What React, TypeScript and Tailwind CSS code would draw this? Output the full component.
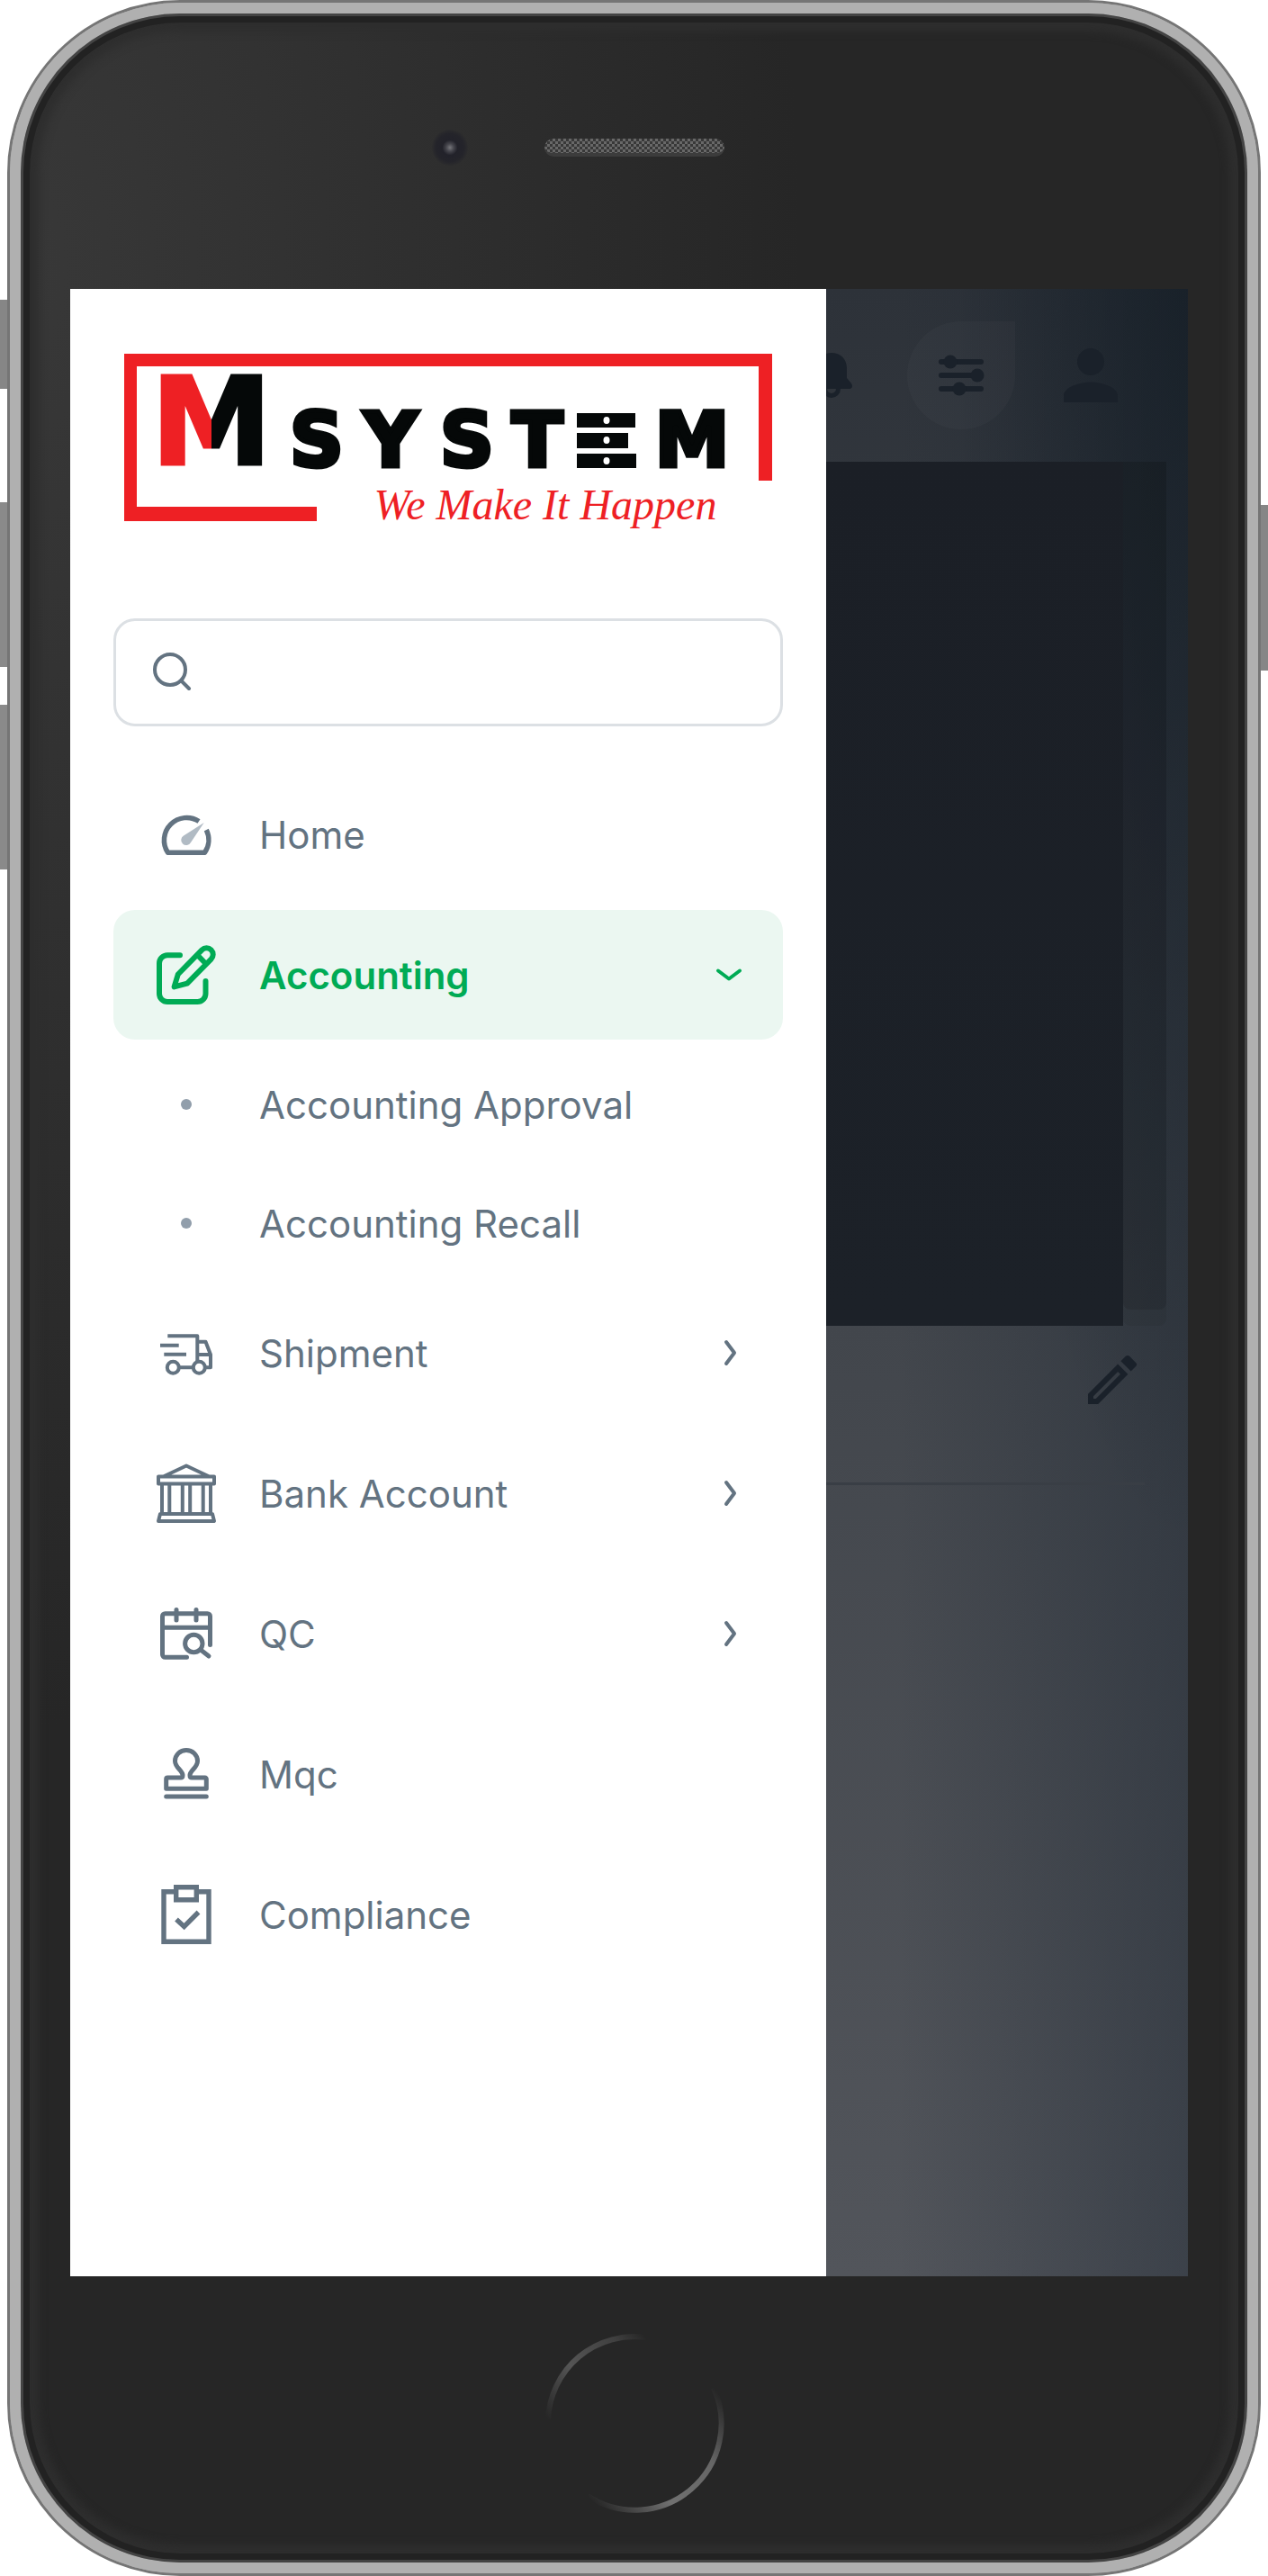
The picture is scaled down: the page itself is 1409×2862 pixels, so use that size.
import { useState } from 'react';
import type { ReactNode } from 'react';
import { MdOutlineEdit, MdPerson } from 'react-icons/md';

const icon = 'size-[72px] shrink-0';

function Logo() {
  return (
    <svg viewBox="0 0 720 190" className="w-full overflow-visible" role="img" aria-label="M System — We Make It Happen">
      <defs>
        <linearGradient id="split" gradientUnits="userSpaceOnUse" x1="39" x2="155" y1="0" y2="0">
          <stop offset="50%" stopColor="#ee2024" />
          <stop offset="50%" stopColor="#050808" />
        </linearGradient>
      </defs>
      <path d="M0 0H720V141H705V14H14V170H214V186H0Z" fill="#ee2024" />
      <g fontFamily="'DejaVu Sans', sans-serif" fontWeight="700" textAnchor="middle" fill="#050808" stroke="#050808" strokeWidth="5">
        <text x="97" y="123" fontSize="135" fill="url(#split)" stroke="url(#split)" strokeWidth="3">M</text>
        <g fontSize="83">
          <text x="214" y="125">S</text>
          <text x="296" y="125">Y</text>
          <text x="381" y="125">S</text>
          <text x="459" y="125">T</text>
          <text x="631" y="125">M</text>
        </g>
      </g>
      <path d="M503 66H568V82H503ZM503 88H560V105H503ZM503 111H569V127H503Z" fill="#050808" />
      <g fill="#fff">
        <ellipse cx="536" cy="74" rx="3.5" ry="4" />
        <ellipse cx="536" cy="96" rx="3.5" ry="4" />
        <ellipse cx="536" cy="119" rx="3.5" ry="4" />
      </g>
      <text x="468" y="184" textAnchor="middle" fontFamily="'Liberation Serif', cursive" fontStyle="italic" fontSize="48" fill="#ee2024">
        We Make It Happen
      </text>
    </svg>
  );
}

const HomeIcon = () => (
  <svg viewBox="0 0 72 72" className={icon} fill="none" aria-hidden="true">
    <path d="M50 21.5A25 25 0 0 0 15.5 56.2H56.5A25 25 0 0 0 58.3 31" stroke="currentColor" strokeWidth="5.5" strokeLinejoin="round" />
    <path d="M55.7 23L41 45A5.7 5.7 0 1 1 33 37.5Z" fill="#b1bbc4" />
  </svg>
);

const EditIcon = () => (
  <svg viewBox="0 0 72 72" className={icon} fill="none" stroke="currentColor" strokeWidth="6" strokeLinecap="round" strokeLinejoin="round" aria-hidden="true">
    <path d="M29 14.3H15A9 9 0 0 0 6 23.3V57A9 9 0 0 0 15 66H48.5A9 9 0 0 0 57.5 57V43" />
    <path d="M22.6 49.4L26.8 35.5L53.4 8.4A7.2 7.2 0 0 1 63.6 18.6L37 45.6ZM48.3 14L58 24" />
  </svg>
);

const TruckIcon = () => (
  <svg viewBox="0 0 72 72" className={icon} fill="none" stroke="currentColor" strokeWidth="4" strokeLinejoin="round" aria-hidden="true">
    <path d="M15.3 17.3H48.3V46M48.3 23.7H57.5L63 38V52.3H58M48.3 38H63M7 27.7H27.7M11.3 37.8H36M28 52.3H43" />
    <circle cx="21.3" cy="52.3" r="6.5" />
    <circle cx="50.3" cy="52.3" r="6.5" />
  </svg>
);

const BankIcon = () => (
  <svg viewBox="0 0 72 72" className={icon} fill="none" stroke="currentColor" strokeWidth="4" strokeLinejoin="round" aria-hidden="true">
    <path d="M10.5 17.5L36 5.5L61.5 17.5M5 17.5H67V25.5H5ZM9 26V58M17.3 26V58M31.8 26V58M40.2 26V58M54.7 26V58M63 26V58M7 59H65L67 67H5Z" />
  </svg>
);

const CalendarSearchIcon = () => (
  <svg viewBox="0 0 72 72" className={icon} fill="none" stroke="currentColor" strokeWidth="5" strokeLinecap="round" strokeLinejoin="round" aria-hidden="true">
    <path d="M36.5 62.3H12.5A3 3 0 0 1 9.5 59.3V16.7A3 3 0 0 1 12.5 13.7H59.5A3 3 0 0 1 62.5 16.7V48.5M9.5 29.3H62.5M25 9.5V21M47 9.5V21M52 54L61 61" />
    <circle cx="44.3" cy="47" r="9.7" />
  </svg>
);

const StampIcon = () => (
  <svg viewBox="0 0 72 72" className={icon} fill="none" stroke="currentColor" strokeWidth="5" strokeLinecap="round" strokeLinejoin="round" aria-hidden="true">
    <path d="M13.7 52.3V41.5A1.5 1.5 0 0 1 15.2 40H30C31.5 40 32 39 32 37.5C32 32 23.5 29 23.5 21.5A12.5 12 0 0 1 48.5 21.5C48.5 29 40 32 40 37.5C40 39 40.5 40 42 40H56.8A1.5 1.5 0 0 1 58.3 41.5V52.3ZM13.7 61H58.3" />
  </svg>
);

const ClipboardIcon = () => (
  <svg viewBox="0 0 72 72" className={icon} fill="none" stroke="currentColor" strokeWidth="5.4" aria-hidden="true">
    <path d="M11 10.7H61V66.3H11Z" />
    <path d="M24.7 5.7H47.3V19.7H24.7Z" fill="#fff" />
    <path d="M25 41.5L33.6 49.5L49.5 33.5" />
  </svg>
);

function Chevron({ open }: { open: boolean }) {
  return (
    <svg viewBox="0 0 48 48" className="size-12 shrink-0" fill="none" stroke="currentColor" strokeWidth="4" strokeLinecap="round" strokeLinejoin="round" aria-hidden="true">
      <path d={open ? 'M12 19.5L24 28.5L36 19.5' : 'M21 12L30 24L21 36'} />
    </svg>
  );
}

type Item = { label: string; icon: ReactNode; children?: string[] };

const items: Item[] = [
  { label: 'Home', icon: <HomeIcon /> },
  { label: 'Accounting', icon: <EditIcon />, children: ['Accounting Approval', 'Accounting Recall'] },
  { label: 'Shipment', icon: <TruckIcon />, children: [] },
  { label: 'Bank Account', icon: <BankIcon />, children: [] },
  { label: 'QC', icon: <CalendarSearchIcon />, children: [] },
  { label: 'Mqc', icon: <StampIcon /> },
  { label: 'Compliance', icon: <ClipboardIcon /> },
];

function NavItem({ item, open, onToggle }: { item: Item; open: boolean; onToggle: () => void }) {
  const base = 'flex h-36 w-full items-center gap-[45px] rounded-3xl pr-9 pl-[45px] text-left text-[42px]';
  if (!item.children) {
    return (
      <li>
        <a href="#" className={base}>
          {item.icon}
          <span>{item.label}</span>
        </a>
      </li>
    );
  }
  return (
    <li>
      <button type="button" aria-expanded={open} onClick={onToggle} className={open ? `${base} bg-[#ebf7f1] font-semibold text-[#00ab55]` : base}>
        {item.icon}
        <span className="flex-1">{item.label}</span>
        <Chevron open={open} />
      </button>
      {open && item.children.length > 0 && (
        <ul className="mt-3 flex flex-col gap-3">
          {item.children.map((label) => (
            <li key={label}>
              <a href="#" className="flex h-[120px] items-center gap-[45px] pl-[45px] text-[42px]">
                <span className="flex w-[72px] justify-center">
                  <span className="size-3 rounded-full bg-[#919eab]" />
                </span>
                <span>{label}</span>
              </a>
            </li>
          ))}
        </ul>
      )}
    </li>
  );
}

function Drawer() {
  const [openItem, setOpenItem] = useState<string | null>('Accounting');
  return (
    <aside className="w-[840px] max-w-full shrink-0 bg-white px-12 text-[#637381]">
      <div className="px-3 pt-[72px]">
        <Logo />
      </div>
      <label className="mt-[104px] flex h-[120px] items-center gap-6 rounded-3xl border-[3px] border-[#dce0e4] px-[33px]">
        <svg viewBox="0 0 60 60" className="size-[60px] shrink-0" fill="none" stroke="currentColor" strokeWidth="4" strokeLinecap="round" aria-hidden="true">
          <circle cx="27" cy="27" r="17" />
          <path d="M39.5 39.5L48 48" />
        </svg>
        <input type="search" aria-label="Search menu" className="h-full min-w-0 flex-1 bg-transparent text-[42px] outline-none" />
      </label>
      <nav className="mt-12">
        <ul className="flex flex-col gap-3">
          {items.map((item) => (
            <NavItem key={item.label} item={item} open={openItem === item.label} onToggle={() => setOpenItem(openItem === item.label ? null : item.label)} />
          ))}
        </ul>
      </nav>
    </aside>
  );
}

function DimmedPage() {
  const round = 'flex size-[120px] shrink-0 items-center justify-center';
  return (
    <main className="flex min-w-0 flex-1 flex-col overflow-hidden bg-[radial-gradient(ellipse_at_100%_0%,rgba(10,20,28,0.45),transparent_45%),linear-gradient(to_right,transparent_20%,rgba(24,34,46,0.38)),linear-gradient(to_bottom,#2d3239,#42464c_52%,#52555b)] text-[#1a212a]">
      <header className="flex h-48 items-center justify-end gap-6 pr-12">
        <button type="button" aria-label="Notifications" className={round}>
          <svg viewBox="0 0 60 60" className="size-[60px]" fill="currentColor" aria-hidden="true">
            <path d="M30 5C20 5 13 12 13 22V33L8 39C6 42 7 45 11 45H49C53 45 54 42 52 39L47 33V22C47 12 40 5 30 5Z" />
            <path d="M22.500 45A7.500 7.500 0 0 0 37.500 45" fill="none" stroke="currentColor" strokeWidth="5" />
          </svg>
        </button>
        <button type="button" aria-label="Settings" className={`${round} rounded-[60px] rounded-tr-none bg-white/[0.025]`}>
          <svg viewBox="0 0 60 60" className="size-[60px]" fill="currentColor" stroke="currentColor" strokeWidth="6" strokeLinecap="round" aria-hidden="true">
            <path d="M8 15H52M8 30H52M8 45H52" />
            <g stroke="none">
              <circle cx="18" cy="15" r="7.500" />
              <circle cx="48" cy="30" r="7.500" />
              <circle cx="28" cy="45" r="7.500" />
            </g>
          </svg>
        </button>
        <button type="button" aria-label="Account" className={round}>
          <MdPerson className="size-[90px]" />
        </button>
      </header>
      <section className="mr-6 flex h-[960px]">
        <div className="flex-1 bg-gradient-to-b from-[#1b1f26] to-[#1c2128]" />
        <div className="w-12 rounded-b-lg bg-black/5 pb-[18px]">
          <div className="h-full rounded-b-lg bg-black/10" />
        </div>
      </section>
      <section className="mr-12 flex h-[177px] justify-end border-b-[3px] border-[#393e45] pt-6">
        <button type="button" aria-label="Edit" className="size-[72px]">
          <MdOutlineEdit className="size-[72px]" />
        </button>
      </section>
    </main>
  );
}

function HomeButton() {
  return (
    <button type="button" aria-label="Home button" className="rounded-full">
      <svg viewBox="0 0 200 200" className="size-[200px]" fill="none" strokeWidth="6" aria-hidden="true">
        <defs>
          <linearGradient id="arcTop" gradientUnits="userSpaceOnUse" x1="4" y1="96" x2="113" y2="5">
            <stop offset="0" stopColor="#262626" />
            <stop offset="0.4" stopColor="#555" />
            <stop offset="0.8" stopColor="#404040" />
            <stop offset="1" stopColor="#262626" />
          </linearGradient>
          <linearGradient id="arcBottom" gradientUnits="userSpaceOnUse" x1="48" y1="181" x2="188" y2="61">
            <stop offset="0" stopColor="#262626" />
            <stop offset="0.35" stopColor="#707070" />
            <stop offset="0.7" stopColor="#666" />
            <stop offset="1" stopColor="#262626" />
          </linearGradient>
        </defs>
        <path d="M4 96A96 96 0 0 1 113 5" stroke="url(#arcTop)" />
        <path d="M188 61A96 96 0 0 1 48 181" stroke="url(#arcBottom)" />
      </svg>
    </button>
  );
}

export default function App() {
  return (
    <div className="relative min-h-screen overflow-hidden bg-white font-[Inter,sans-serif]">
      <div className="absolute top-[333px] left-0 h-[99px] w-3 bg-[#868686]" />
      <div className="absolute top-[558px] left-0 h-[183px] w-3 bg-[#8a8a8a]" />
      <div className="absolute top-[783px] left-0 h-[183px] w-3 bg-[#8a8a8a]" />
      <div className="absolute top-[561px] right-0 h-[184px] w-3 bg-[#868686]" />
      <div className="relative mx-2 flex min-h-screen flex-col rounded-[192px] border-[3px] border-[#757575] bg-[#b0b0b0]">
        <div className="flex flex-1 flex-col rounded-[189px] border-[12px] border-[#b0b0b0] bg-[#b0b0b0]">
          <div className="flex flex-1 flex-col rounded-[177px] bg-[#262626] bg-[radial-gradient(ellipse_at_0%_10%,#383838,transparent_45%)] pr-[66px] pl-[55px] shadow-[inset_0_0_0_3px_#444,inset_0_0_0_10px_#222,inset_0_0_10px_20px_#2e2e2e]">
            <div className="grid h-[306px] grid-cols-[1fr_auto_1fr] items-center gap-[85px] pb-2 pl-3">
              <div className="size-10 justify-self-end rounded-full bg-[radial-gradient(circle,#77777c_0,#45454c_15%,#22222a_30%,#24242a_55%,transparent_75%)]" />
              <div className="h-5 w-[200px] rounded-full border-b-4 border-[#3c3c3c] bg-[#333] bg-[repeating-conic-gradient(#686868_0_25%,#383838_0_50%)] bg-[length:6px_6px]" />
            </div>
            <div className="flex flex-1 overflow-hidden">
              <Drawer />
              <DimmedPage />
            </div>
            <div className="flex h-[318px] items-center justify-center pt-2 pl-3">
              <HomeButton />
            </div>
          </div>
        </div>
      </div>
    </div>
  );
}
